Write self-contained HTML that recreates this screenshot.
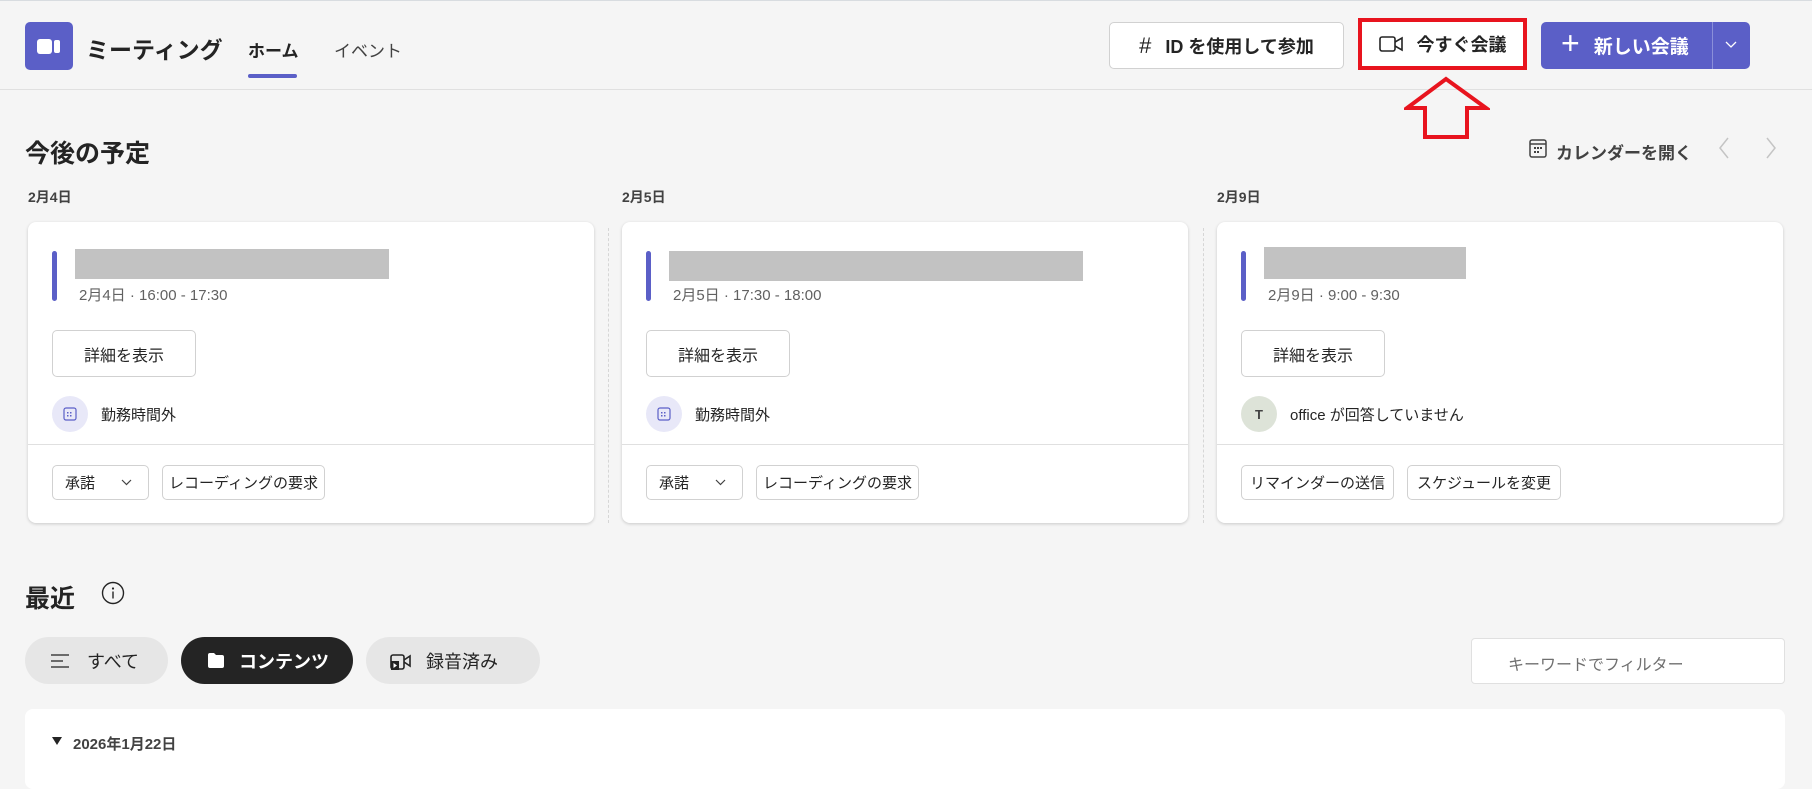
<!DOCTYPE html>
<html><head><meta charset="utf-8"><style>
*{box-sizing:border-box;margin:0;padding:0}
body{width:1812px;height:783px;overflow:hidden;background:#f5f5f5;font-family:"Liberation Sans","Noto Sans CJK JP",sans-serif;color:#242424;position:relative}
.a{position:absolute}
.btn{position:absolute;background:#fff;border:1px solid #d1d1d1;border-radius:5px;display:flex;align-items:center;justify-content:center;font-size:16px;color:#242424;white-space:nowrap}
.card{position:absolute;top:222px;width:566px;height:301px;background:#fff;border-radius:8px;box-shadow:0 1px 3px rgba(0,0,0,.18)}
.bar{position:absolute;left:24px;top:29px;width:5px;height:50px;background:#5b5fc7;border-radius:3px}
.gray{position:absolute;top:27px;height:30px;background:#c2c2c2;left:47px}
.time{position:absolute;left:51px;top:62px;font-size:15px;color:#616161}
.det{left:24px;top:108px;width:144px;height:47px;font-size:16px}
.av{position:absolute;left:24px;top:174px;width:36px;height:36px;border-radius:50%;background:#e8e8f8;display:flex;align-items:center;justify-content:center}
.avt{position:absolute;left:73px;top:182px;font-size:15px}
.hr{position:absolute;left:0;right:0;top:222px;border-top:1px solid #e0e0e0}
.sb{top:243px;height:35px;font-size:15px}
.sep{position:absolute;top:228px;height:295px;border-left:1px dashed #d6d6d6}
.date{position:absolute;top:187px;font-size:14px;font-weight:bold;color:#424242}
.pill{position:absolute;top:637px;height:47px;border-radius:24px;background:#e6e6e6;display:flex;align-items:center;font-size:18px}
</style></head><body>
<div class="a" style="left:0;top:0;width:1812px;height:1px;background:#d8dce0"></div>
<div class="a" style="left:25px;top:22px;width:48px;height:48px;background:#5b5fc7;border-radius:5px">
<div class="a" style="left:12px;top:17px;width:15px;height:15px;background:#fff;border-radius:3px"></div>
<div class="a" style="left:29px;top:18px;width:6px;height:13px;background:#fff;border-radius:2px"></div></div>
<div class="a" style="left:86px;top:31px;font-size:23px;font-weight:bold">ミーティング</div>
<div class="a" style="left:248px;top:37px;font-size:17px;font-weight:bold">ホーム</div>
<div class="a" style="left:248px;top:74px;width:49px;height:4px;background:#5b5fc7;border-radius:2px"></div>
<div class="a" style="left:334px;top:37px;font-size:17px;color:#424242">イベント</div>
<div class="a" style="left:0;top:89px;width:1812px;height:1px;background:#e0e0e0"></div>

<div class="btn" style="left:1109px;top:22px;width:235px;height:47px;font-weight:bold;font-size:18px"><span style="font-size:22px;font-weight:normal;margin-right:14px">#</span>ID を使用して参加</div>
<div class="btn" style="left:1358px;top:18px;width:169px;height:52px;border:4px solid #e8141e;border-radius:0;font-weight:bold;font-size:18px">
<svg width="26" height="20" viewBox="0 0 26 20" style="margin-right:12px"><rect x="1" y="3" width="15" height="14" rx="2" fill="none" stroke="#242424" stroke-width="1.6"/><path d="M16 8 L23 4 V16 L16 12" fill="none" stroke="#242424" stroke-width="1.6"/></svg>今すぐ会議</div>
<div class="a" style="left:1541px;top:22px;width:209px;height:47px;background:#5b5fc7;border-radius:5px;color:#fff;font-weight:bold;font-size:19px;display:flex;align-items:center">
<span style="font-size:32px;font-weight:normal;margin:0 14px 4px 20px">+</span>新しい会議
<div class="a" style="left:171px;top:0;width:1px;height:47px;background:#8b8fd9"></div>
<svg class="a" style="left:184px;top:19px" width="12" height="8"><path d="M1 1 L6 6 L11 1" fill="none" stroke="#fff" stroke-width="1.3"/></svg></div>
<svg class="a" style="left:1404px;top:76px" width="86" height="65"><path d="M42 3 L82 32 L63 32 L63 61 L21 61 L21 32 L3 32 Z" fill="none" stroke="#e8141e" stroke-width="4"/></svg>

<div class="a" style="left:25px;top:134px;font-size:25px;font-weight:bold">今後の予定</div>
<svg class="a" style="left:1528px;top:138px" width="20" height="21"><rect x="2" y="2" width="16" height="17" rx="2" fill="none" stroke="#424242" stroke-width="1.5"/><line x1="2" y1="6" x2="18" y2="6" stroke="#424242" stroke-width="1.5"/><g fill="#424242"><rect x="6" y="9" width="2" height="2"/><rect x="9" y="9" width="2" height="2"/><rect x="12" y="9" width="2" height="2"/><rect x="6" y="13" width="2" height="2"/><rect x="9" y="13" width="2" height="2"/></g></svg>
<div class="a" style="left:1556px;top:139px;font-size:17px;font-weight:bold;color:#424242">カレンダーを開く</div>
<svg class="a" style="left:1718px;top:137px" width="12" height="22"><path d="M10 1 L2 11 L10 21" fill="none" stroke="#c4c4c4" stroke-width="1.5"/></svg>
<svg class="a" style="left:1765px;top:137px" width="12" height="22"><path d="M2 1 L10 11 L2 21" fill="none" stroke="#c4c4c4" stroke-width="1.5"/></svg>

<div class="date" style="left:28px">2月4日</div>
<div class="date" style="left:622px">2月5日</div>
<div class="date" style="left:1217px">2月9日</div>
<div class="sep" style="left:608px"></div>
<div class="sep" style="left:1203px"></div>

<div class="card" style="left:28px">
<div class="bar"></div><div class="gray" style="width:314px"></div>
<div class="time">2月4日 · 16:00 - 17:30</div>
<div class="btn det">詳細を表示</div>
<div class="av"><svg width="14" height="14"><rect x="1" y="1" width="12" height="12" rx="2" fill="none" stroke="#5b5fc7" stroke-width="1.2"/><g fill="#5b5fc7"><rect x="4" y="5" width="1.5" height="1.5"/><rect x="7" y="5" width="1.5" height="1.5"/><rect x="4" y="8" width="1.5" height="1.5"/><rect x="7" y="8" width="1.5" height="1.5"/></g></svg></div>
<div class="avt">勤務時間外</div>
<div class="hr"></div>
<div class="btn sb" style="left:24px;width:97px;justify-content:flex-start;padding-left:12px">承諾<svg style="margin-left:26px" width="11" height="7"><path d="M1 1 L5.5 5.5 L10 1" fill="none" stroke="#424242" stroke-width="1.2"/></svg></div>
<div class="btn sb" style="left:134px;width:163px">レコーディングの要求</div>
</div>

<div class="card" style="left:622px">
<div class="bar"></div><div class="gray" style="width:414px;top:29px"></div>
<div class="time">2月5日 · 17:30 - 18:00</div>
<div class="btn det">詳細を表示</div>
<div class="av"><svg width="14" height="14"><rect x="1" y="1" width="12" height="12" rx="2" fill="none" stroke="#5b5fc7" stroke-width="1.2"/><g fill="#5b5fc7"><rect x="4" y="5" width="1.5" height="1.5"/><rect x="7" y="5" width="1.5" height="1.5"/><rect x="4" y="8" width="1.5" height="1.5"/><rect x="7" y="8" width="1.5" height="1.5"/></g></svg></div>
<div class="avt">勤務時間外</div>
<div class="hr"></div>
<div class="btn sb" style="left:24px;width:97px;justify-content:flex-start;padding-left:12px">承諾<svg style="margin-left:26px" width="11" height="7"><path d="M1 1 L5.5 5.5 L10 1" fill="none" stroke="#424242" stroke-width="1.2"/></svg></div>
<div class="btn sb" style="left:134px;width:163px">レコーディングの要求</div>
</div>

<div class="card" style="left:1217px">
<div class="bar"></div><div class="gray" style="width:202px;top:25px;height:32px"></div>
<div class="time">2月9日 · 9:00 - 9:30</div>
<div class="btn det">詳細を表示</div>
<div class="av" style="background:#dde3d8;font-size:13px;font-weight:bold;color:#424242">T</div>
<div class="avt">office が回答していません</div>
<div class="hr"></div>
<div class="btn sb" style="left:24px;width:153px">リマインダーの送信</div>
<div class="btn sb" style="left:190px;width:154px">スケジュールを変更</div>
</div>

<div class="a" style="left:25px;top:579px;font-size:25px;font-weight:bold">最近</div>
<svg class="a" style="left:101px;top:581px" width="24" height="24"><circle cx="12" cy="12" r="10.5" fill="none" stroke="#242424" stroke-width="1.4"/><circle cx="12" cy="7.5" r="1.1" fill="#242424"/><line x1="12" y1="10.5" x2="12" y2="17.5" stroke="#242424" stroke-width="1.4"/></svg>

<div class="pill" style="left:25px;width:143px"><svg style="margin:0 18px 0 26px" width="18" height="14"><g stroke="#424242" stroke-width="1.5"><line x1="0" y1="1" x2="18" y2="1"/><line x1="0" y1="7" x2="12" y2="7"/><line x1="0" y1="13" x2="18" y2="13"/></g></svg>すべて</div>
<div class="pill" style="left:181px;width:172px;background:#242424;color:#fff;font-weight:bold"><svg style="margin:0 14px 0 26px" width="18" height="17"><path d="M1 3 Q1 1 3 1 H7 L9 3 H15 Q17 3 17 5 V14 Q17 16 15 16 H3 Q1 16 1 14 Z" fill="#fff"/></svg>コンテンツ</div>
<div class="pill" style="left:366px;width:174px"><svg style="margin:0 14px 0 24px" width="22" height="20"><rect x="1" y="4" width="13" height="14" rx="2" fill="none" stroke="#242424" stroke-width="1.6"/><path d="M14 9 L20 5 V15 L14 11" fill="none" stroke="#242424" stroke-width="1.6"/><rect x="1" y="10" width="8" height="9" fill="#242424"/><path d="M3.5 12 L7 14.5 L3.5 17Z" fill="#fff"/></svg>録音済み</div>
<div class="a" style="left:1471px;top:638px;width:314px;height:46px;background:#fff;border:1px solid #e0e0e0;border-radius:4px;font-size:16px;color:#707070;padding:12px 0 0 36px">キーワードでフィルター</div>

<div class="a" style="left:25px;top:709px;width:1760px;height:80px;background:#fff;border-radius:8px"></div>
<svg class="a" style="left:52px;top:737px" width="10" height="8"><path d="M0 0 H10 L5 8 Z" fill="#242424"/></svg>
<div class="a" style="left:73px;top:733px;font-size:15px;font-weight:bold;color:#424242">2026年1月22日</div>
</body></html>
